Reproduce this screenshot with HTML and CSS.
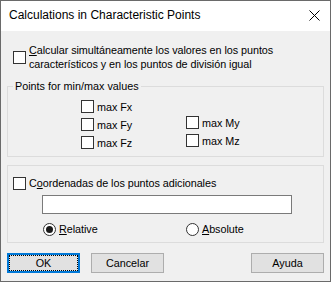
FILE: index.html
```html
<!DOCTYPE html>
<html>
<head>
<meta charset="utf-8">
<link rel="stylesheet" href="styles.css">
</head>
<body>
<div class="window">
  <div class="titlebar">
    <span class="title">Calculations in Characteristic Points</span>
    <svg class="close" width="11" height="11" viewBox="0 0 11 11"><path d="M0.5 0.5 L10.5 10.5 M10.5 0.5 L0.5 10.5" stroke="#000" stroke-width="1" fill="none"/></svg>
  </div>
  <div class="client">
    <div class="check-row main-check">
      <span class="box"></span>
      <span class="label"><u>C</u>alcular simultáneamente los valores en los puntos<br>característicos y en los puntos de división igual</span>
    </div>

    <fieldset class="group minmax">
      <legend>Points for min/max values</legend>
      <div class="cols">
        <div class="col col1">
          <div class="check-row item"><span class="box"></span><span class="label">max Fx</span></div>
          <div class="check-row item"><span class="box"></span><span class="label">max Fy</span></div>
          <div class="check-row item"><span class="box"></span><span class="label">max Fz</span></div>
        </div>
        <div class="col col2">
          <div class="check-row item"><span class="box"></span><span class="label">max My</span></div>
          <div class="check-row item"><span class="box"></span><span class="label">max Mz</span></div>
        </div>
      </div>
    </fieldset>

    <div class="group coords">
      <div class="check-row"><span class="box"></span><span class="label">C<u>o</u>ordenadas de los puntos adicionales</span></div>
      <div class="input"></div>
      <div class="radios">
        <div class="radio-row rel"><span class="radio on"></span><span class="label"><u>R</u>elative</span></div>
        <div class="radio-row abs"><span class="radio"></span><span class="label"><u>A</u>bsolute</span></div>
      </div>
    </div>

    <div class="buttons">
      <div class="btn default"><span class="focus">OK</span></div>
      <div class="btn">Cancelar</div>
      <div class="spacer"></div>
      <div class="btn">Ayuda</div>
    </div>
  </div>
</div>
</body>
</html>
```

FILE: styles.css
```css
html, body {
  margin: 0;
  padding: 0;
  width: 331px;
  height: 282px;
  overflow: hidden;
  background: #f0f0f0;
}
.window {
  box-sizing: border-box;
  width: 331px;
  height: 282px;
  border: 1px solid #6a6a6a;
  display: flex;
  flex-direction: column;
  font-family: "Liberation Sans", Arial, sans-serif;
  font-size: 10.8px;
  color: #000;
}
.titlebar {
  height: 30px;
  flex: none;
  background: #fff;
  display: flex;
  align-items: center;
  justify-content: space-between;
  padding: 0 10px 0 8px;
}
.title {
  font-size: 12px;
  margin-top: -2px;
}
.close {
  margin-top: -2px;
}
.client {
  flex: 1;
  background: #f0f0f0;
  padding: 0 6px 0 6px;
  display: flex;
  flex-direction: column;
}
.check-row {
  display: flex;
  align-items: center;
}
.box {
  box-sizing: border-box;
  width: 13px;
  height: 13px;
  border: 1px solid #333;
  background: #fff;
  flex: none;
  margin-right: 3px;
}
.label {
  line-height: 14px;
  letter-spacing: -0.05px;
}
.main-check {
  margin-top: 12px;
  padding-left: 6px;
}
.group {
  border: 1px solid #dcdcdc;
  margin: 0;
}
fieldset.group {
  margin-top: 9px;
  padding: 0;
  height: 77px;
  box-sizing: border-box;
  flex: none;
}
legend {
  margin-left: 5px;
  padding: 0 2px;
  line-height: 13px;
}
.cols {
  display: flex;
  padding-left: 73px;
  padding-top: 7px;
}
.col {
  display: flex;
  flex-direction: column;
  gap: 5px;
}
.col1 {
  width: 105px;
}
.col2 {
  padding-top: 16px;
}
.item {
  height: 13px;
}
.coords {
  margin-top: 8px;
  height: 78px;
  flex: none;
  box-sizing: border-box;
  padding: 10px 0 0 5px;
  display: flex;
  flex-direction: column;
}
.input {
  box-sizing: border-box;
  margin-top: 5px;
  margin-left: 29px;
  width: 250px;
  height: 19px;
  background: #fff;
  border: 1px solid #7a7a7a;
}
.radios {
  display: flex;
  margin-top: 8px;
  padding-left: 30px;
}
.radio-row {
  display: flex;
  align-items: center;
}
.rel {
  width: 143px;
}
.radio {
  box-sizing: border-box;
  width: 13px;
  height: 13px;
  border: 1px solid #333;
  border-radius: 50%;
  background: #fff;
  margin-right: 3px;
  display: flex;
  align-items: center;
  justify-content: center;
}
.radio.on::after {
  content: "";
  width: 7px;
  height: 7px;
  border-radius: 50%;
  background: #1a1a1a;
}
.buttons {
  display: flex;
  margin-top: 10px;
  gap: 11px;
}
.spacer {
  flex: 1;
}
.btn {
  box-sizing: border-box;
  width: 73px;
  height: 20px;
  background: #e1e1e1;
  border: 1px solid #adadad;
  display: flex;
  align-items: center;
  justify-content: center;
}
.btn.default {
  border: 1px solid #0078d7;
  padding: 1px;
  box-shadow: inset 0 0 0 1px #0078d7;
}
.focus {
  box-sizing: border-box;
  width: 100%;
  height: 100%;
  border: 1px dotted #000;
  display: flex;
  align-items: center;
  justify-content: center;
}
```
